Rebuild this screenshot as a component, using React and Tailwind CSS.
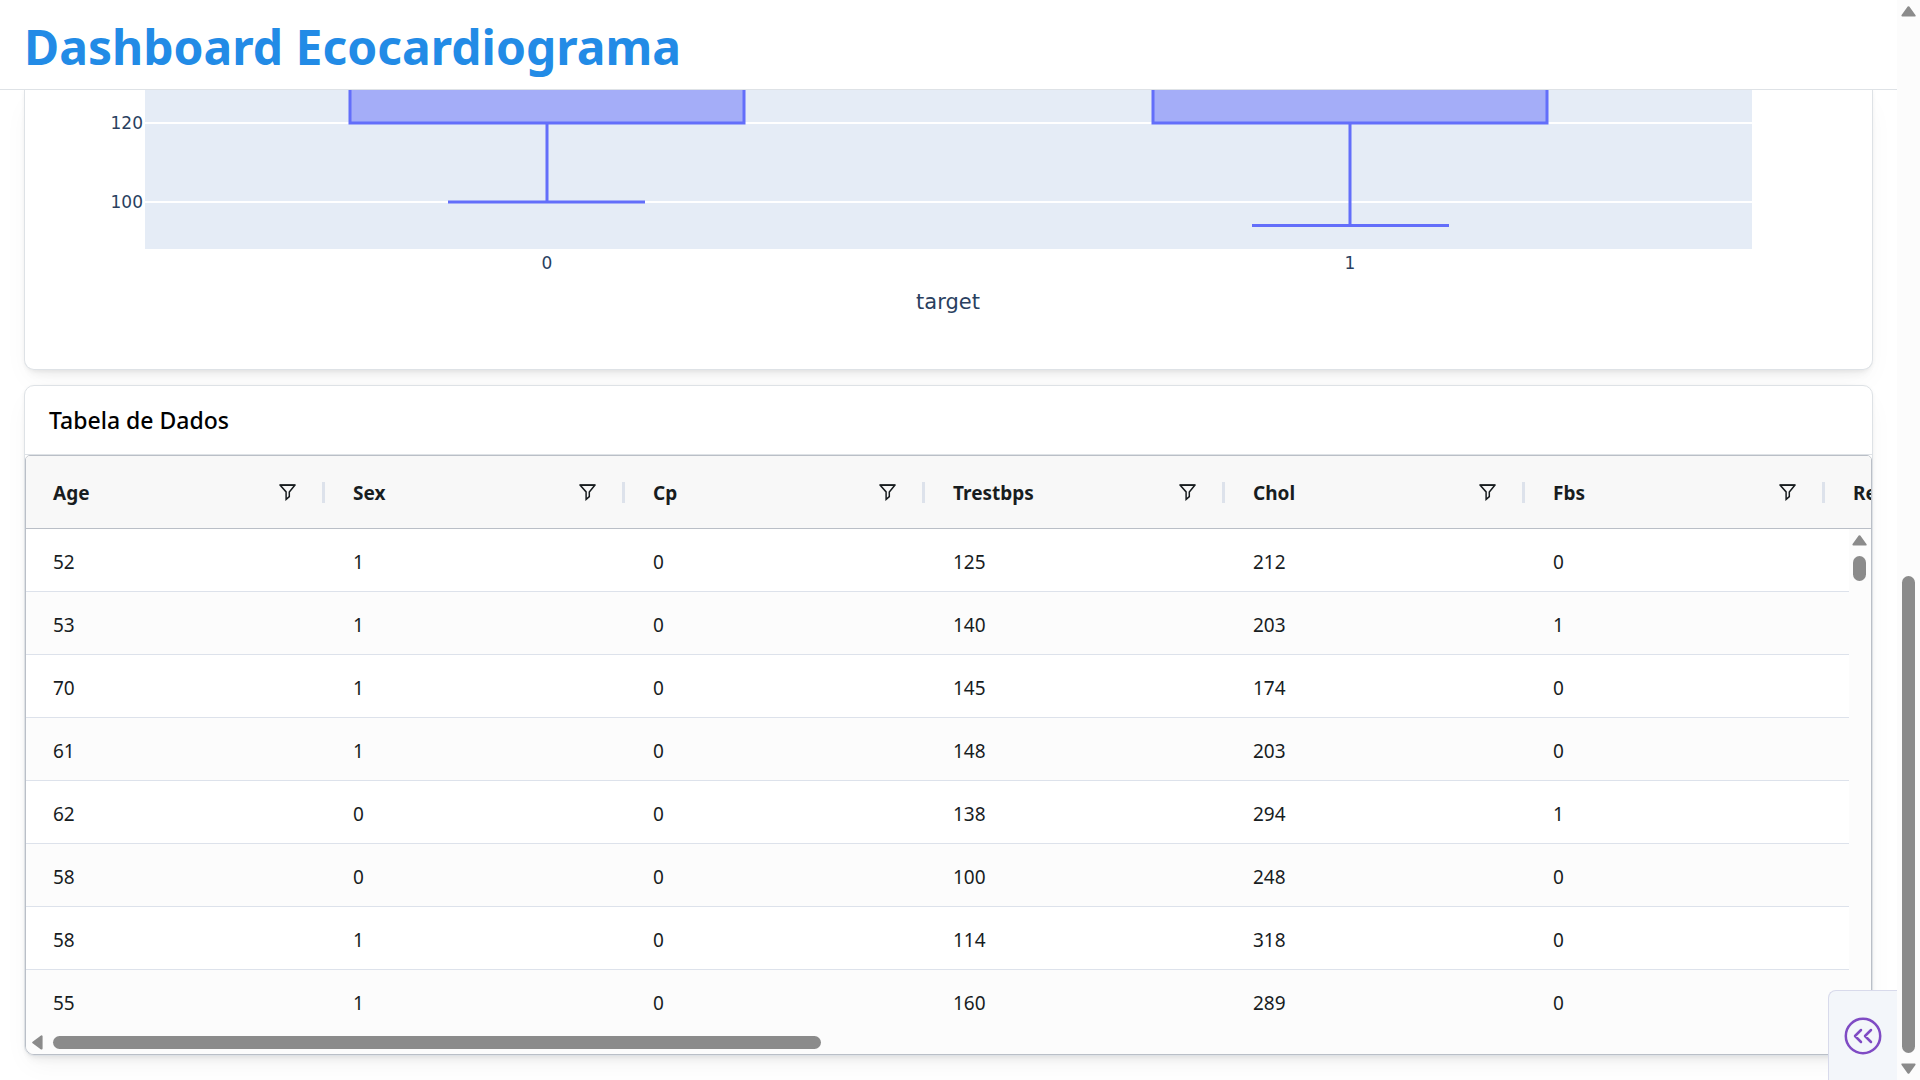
import React from "react";

const columns = ["Age", "Sex", "Cp", "Trestbps", "Chol", "Fbs", "Restecg"];

const rows = [
  [52, 1, 0, 125, 212, 0],
  [53, 1, 0, 140, 203, 1],
  [70, 1, 0, 145, 174, 0],
  [61, 1, 0, 148, 203, 0],
  [62, 0, 0, 138, 294, 1],
  [58, 0, 0, 100, 248, 0],
  [58, 1, 0, 114, 318, 0],
  [55, 1, 0, 160, 289, 0],
];

function Arrow({ className }) {
  return (
    <svg aria-hidden="true" viewBox="0 0 15 11" className={`w-[15px] h-[11px] shrink-0 ${className}`}>
      <path d="M7.5 1.2 L13.6 9.6 H1.4 Z" fill="#8b8b8b" stroke="#8b8b8b" strokeWidth="2" strokeLinejoin="round" />
    </svg>
  );
}

function FilterIcon() {
  return (
    <svg aria-hidden="true" viewBox="0 0 17 17" className="w-[17px] h-[17px]" fill="none" stroke="#181d1f" strokeWidth="1.5">
      <path d="M1.2 1.2 H15.8 L10.3 7.9 V12.6 L7.1 15.4 V7.9 Z" />
      <path d="M1 1.2 H16" strokeWidth="1.8" />
    </svg>
  );
}

function BoxPlot() {
  return (
    <svg role="img" aria-label="Boxplot por target" viewBox="0 0 1847 279" className="block w-full">
      <rect x="120" y="0" width="1607" height="159" fill="#e5ecf6" />
      <path d="M120 33 H1727 M120 112 H1727" stroke="#fff" strokeWidth="2" />
      <g fill="#636efa" fillOpacity="0.5" stroke="#636efa" strokeWidth="3">
        <rect x="325" y="-40" width="394" height="73" />
        <rect x="1128" y="-40" width="394" height="73" />
      </g>
      <path
        d="M522 33 V112 M423 112 H620 M1325 33 V135.5 M1227 135.5 H1424"
        stroke="#636efa"
        strokeWidth="3"
        fill="none"
      />
      <g fill="#2a3f5f" fontFamily="'DejaVu Sans', Verdana, sans-serif" fontSize="17">
        <text x="118" y="39" textAnchor="end">120</text>
        <text x="118" y="118" textAnchor="end">100</text>
        <text x="522" y="179" textAnchor="middle">0</text>
        <text x="1325" y="179" textAnchor="middle">1</text>
        <text x="923" y="219" textAnchor="middle" fontSize="21">target</text>
      </g>
    </svg>
  );
}

function DataGrid() {
  return (
    <div className="relative flex h-[600px] flex-col overflow-hidden rounded-t-[5px] rounded-b-[9px] border border-[#babfc7] bg-[#fcfcfc]">
      <div className="min-h-0 flex-1 overflow-hidden">
        <table className="w-[2100px] table-fixed border-separate border-spacing-0 text-left text-[19px] text-[#181d1f]">
          <thead>
            <tr className="h-[73px] bg-[#f8f8f8]">
              {columns.map((c) => (
                <th key={c} scope="col" className="border-b border-[#babfc7] py-0 pr-0 pl-[27px] font-bold">
                  <div className="flex items-center">
                    <span className="flex-1 pt-0.5">{c}</span>
                    <button type="button" aria-label={`Filtrar ${c}`} className="mr-[26px]">
                      <FilterIcon />
                    </button>
                    <span className="mr-px h-[21px] w-[3px] bg-[#dde2eb]" />
                  </div>
                </th>
              ))}
            </tr>
          </thead>
          <tbody>
            {rows.map((r, i) => (
              <tr key={i} className="h-[63px] odd:bg-white even:bg-[#fcfcfc]">
                {columns.map((c, j) => (
                  <td key={c} className="border-b border-[#dde2eb] pt-1 pb-0 pl-[27px]">
                    {r[j]}
                  </td>
                ))}
              </tr>
            ))}
          </tbody>
        </table>
      </div>
      <div className="flex h-[23px] shrink-0 items-center bg-[#fcfcfc] pl-1">
        <Arrow className="-rotate-90" />
        <div className="ml-2 h-[13px] w-[41.7%] rounded-full bg-[#8b8b8b]" />
      </div>
      <div className="absolute top-[73px] right-0 bottom-0 flex w-[22px] flex-col items-center bg-[#fcfcfc] pt-1.5 pr-px">
        <Arrow className="" />
        <div className="mt-[10px] h-[25px] w-[13px] rounded-full bg-[#8b8b8b]" />
      </div>
    </div>
  );
}

export default function App() {
  return (
    <div className="flex h-screen overflow-hidden bg-white font-['Noto_Sans',sans-serif]">
      <div className="relative flex min-w-0 flex-1 flex-col">
        <header className="z-10 flex h-[90px] shrink-0 items-center border-b border-[#dee2e6] bg-white px-6 pt-1">
          <h1 className="text-[48px] leading-none font-bold text-[#228be6]">Dashboard Ecocardiograma</h1>
        </header>
        <main className="flex min-h-0 flex-1 flex-col gap-[15px] overflow-hidden px-6">
          <section className="shrink-0 rounded-b-[10px] border border-t-0 border-[#dee2e6] bg-white shadow-[0_1px_4px_rgba(0,0,0,0.05),0_12px_29px_-6px_rgba(0,0,0,0.05),0_9px_9px_-6px_rgba(0,0,0,0.06)]">
            <BoxPlot />
          </section>
          <section className="shrink-0 rounded-[10px] border border-[#dee2e6] bg-white shadow-[0_1px_4px_rgba(0,0,0,0.05),0_12px_29px_-6px_rgba(0,0,0,0.05),0_9px_9px_-6px_rgba(0,0,0,0.06)]">
            <h2 className="flex h-[69px] items-center border-b border-[#dee2e6] px-6 text-[23px] font-medium text-black">
              Tabela de Dados
            </h2>
            <DataGrid />
          </section>
        </main>
        <div className="absolute right-0 bottom-0 z-20 flex h-[90px] w-[69px] justify-center rounded-tl-lg border-t border-l border-[#d8daeb] bg-[#f3f6fa] pt-[26px]">
          <button type="button" aria-label="Abrir ferramentas" className="h-[38px] w-[38px]">
            <svg aria-hidden="true" viewBox="0 0 38 38" fill="none" stroke="#7f4bc4" strokeWidth="2.5">
              <circle cx="19" cy="19" r="17.2" />
              <path d="M17 13 L11 19 L17 25 M27 13 L21 19 L27 25" strokeLinecap="round" strokeLinejoin="round" />
            </svg>
          </button>
        </div>
      </div>
      <div className="flex w-[23px] shrink-0 flex-col items-center bg-[#fcfcfc] py-1.5">
        <Arrow className="" />
        <div className="flex w-[13px] flex-1 flex-col justify-end py-[10px]">
          <div className="h-[46.5%] rounded-full bg-[#8b8b8b]" />
        </div>
        <Arrow className="rotate-180" />
      </div>
    </div>
  );
}
